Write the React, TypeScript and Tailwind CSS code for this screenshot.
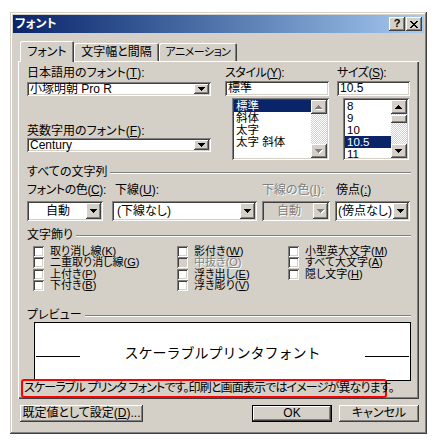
import React from "react";

const raised =
  "shadow-[inset_-1px_-1px_#404040,inset_1px_1px_#ffffff,inset_-2px_-2px_#808080,inset_2px_2px_#d4d0c8]";
const sunken =
  "shadow-[inset_1px_1px_#808080,inset_-1px_-1px_#ffffff,inset_2px_2px_#404040,inset_-2px_-2px_#d4d0c8]";
const dim = "text-[#808080] [text-shadow:1px_1px_0_#ffffff]";

// pixel staircase triangles, classic style
const DOWN = "M0 0H7V1H6V2H5V3H4V4H3V3H2V2H1V1H0Z";
const UP = "M3 0H4V1H5V2H6V3H7V4H0V3H1V2H2V1H3Z";

function Arrow({ up = false, disabled = false }: { up?: boolean; disabled?: boolean }) {
  const d = up ? UP : DOWN;
  return (
    <svg width="8" height="5" viewBox="0 0 8 5" shapeRendering="crispEdges" className="block">
      {disabled && <path d={d} fill="#ffffff" transform="translate(1 1)" />}
      <path d={d} fill={disabled ? "#808080" : "#000000"} />
    </svg>
  );
}

function Combo({
  className,
  children,
  btn,
  disabled = false,
  center = false,
}: {
  className: string;
  children: React.ReactNode;
  btn: string;
  disabled?: boolean;
  center?: boolean;
}) {
  return (
    <div className={`${className} ${disabled ? "bg-[#d4d0c8]" : "bg-white"} ${sunken} p-[2px] flex`}>
      <div
        className={`flex-1 flex items-center whitespace-nowrap pl-[1px] leading-[10px] ${
          center ? "justify-center" : ""
        } ${disabled ? dim : ""}`}
      >
        {children}
      </div>
      <div className={`${btn} h-full bg-[#d4d0c8] ${raised} flex items-center justify-center`}>
        <Arrow disabled={disabled} />
      </div>
    </div>
  );
}

function TextBox({ className, children }: { className: string; children: React.ReactNode }) {
  return (
    <div className={`${className} bg-white ${sunken} px-[3px] flex items-center whitespace-nowrap leading-[11px]`}>
      {children}
    </div>
  );
}

function ScrollBtn({ up = false, disabled = false }: { up?: boolean; disabled?: boolean }) {
  return (
    <div className={`h-[14px] w-[16px] shrink-0 bg-[#d4d0c8] ${raised} flex items-center justify-center`}>
      <Arrow up={up} disabled={disabled} />
    </div>
  );
}

const track =
  "bg-[image:repeating-conic-gradient(#ffffff_0_25%,#d4d0c8_0_50%)] bg-[length:2px_2px]";

function ListBox({
  className,
  items,
  selected,
  disabled = false,
}: {
  className: string;
  items: string[];
  selected: number;
  disabled?: boolean;
}) {
  return (
    <div className={`${className} bg-white ${sunken} p-[2px] flex`}>
      <div className="flex-1 flex flex-col overflow-hidden">
        {items.map((it, i) => (
          <div
            key={it}
            className={`h-[12px] shrink-0 text-[11.5px] leading-[12px] pl-[2px] whitespace-nowrap ${
              i === selected ? "bg-[#0a246a] text-white" : ""
            }`}
          >
            {it}
          </div>
        ))}
      </div>
      <div className="w-[16px] flex flex-col">
        <ScrollBtn up disabled={disabled} />
        <div className={`flex-1 ${track} flex flex-col pt-[1px]`}>
          {!disabled && <div className={`h-[8px] bg-[#d4d0c8] ${raised}`} />}
        </div>
        <ScrollBtn disabled={disabled} />
      </div>
    </div>
  );
}

function GroupHead({ label, className }: { label: string; className: string }) {
  return (
    <div className={`${className} flex`}>
      <span className="leading-[13px] whitespace-nowrap pr-[3px]">{label}</span>
      <div className="flex-1 h-[2px] border-t border-t-[#808080] bg-white self-center" />
    </div>
  );
}

function Check({ label, k, disabled = false }: { label: string; k: string; disabled?: boolean }) {
  return (
    <div className="h-[11.33px] flex items-center whitespace-nowrap">
      <div className={`w-[11px] h-[11px] shrink-0 ${disabled ? "bg-[#d4d0c8]" : "bg-white"} ${sunken}`} />
      <span className={`ml-[6px] text-[11px] leading-[11px] ${disabled ? dim : ""}`}>
        {label}(<u>{k}</u>)
      </span>
    </div>
  );
}

const tabShadow = "shadow-[inset_1px_1px_#ffffff,inset_-1px_0_#404040,inset_-2px_0_#808080]";

export default function App() {
  return (
    <div className="w-[437px] h-[445px] bg-white pl-[10px] pt-[12px] font-['Liberation_Sans','Noto_Sans_CJK_JP',sans-serif] text-[12px] text-black [font-feature-settings:'palt']">
      <div className="w-[417px] h-[422px] bg-[#d4d0c8] p-[3px] flex flex-col shadow-[inset_-1px_-1px_#404040,inset_1px_1px_#d4d0c8,inset_-2px_-2px_#808080,inset_2px_2px_#ffffff]">
        {/* title bar */}
        <div className="h-[18px] shrink-0 bg-linear-to-r from-[#0a246a] to-[#a6caf0] flex items-center pl-[2px] pr-[2px]">
          <span className="text-white font-bold leading-[18px]">フォント</span>
          <div className="ml-auto flex gap-[1px]">
            <div className={`w-[16px] h-[14px] bg-[#d4d0c8] ${raised} flex items-center justify-center text-[11px] font-bold leading-none pb-[1px]`}>
              ?
            </div>
            <div className={`w-[16px] h-[14px] bg-[#d4d0c8] ${raised} flex items-center justify-center`}>
              <svg width="8" height="7" viewBox="0 0 8 7" shapeRendering="crispEdges">
                <path
                  d="M0 0H2V1H3V2H5V1H6V0H8V1H7V2H6V3H5V4H6V5H7V6H8V7H6V6H5V5H3V6H2V7H0V6H1V5H2V4H3V3H2V2H1V1H0Z"
                  fill="#000"
                />
              </svg>
            </div>
          </div>
        </div>

        <div className="px-[5px] flex flex-col">
          {/* tabs */}
          <div className="h-[28px] flex items-end pl-[2px] whitespace-nowrap">
            <div className={`relative z-10 -mb-[1px] w-[54px] h-[21px] bg-[#d4d0c8] rounded-t-[2px] ${tabShadow} flex items-center justify-center pt-[1px]`}>
              フォント
            </div>
            <div className={`w-[85px] h-[18px] rounded-t-[2px] ${tabShadow} flex items-center justify-center`}>
              文字幅と間隔
            </div>
            <div className={`w-[78px] h-[18px] rounded-t-[2px] ${tabShadow} flex items-center justify-center text-[11px] tracking-[-0.5px]`}>
              アニメーション
            </div>
          </div>

          {/* panel */}
          <div className="h-[338px] shadow-[inset_1px_1px_#ffffff,inset_-1px_-1px_#404040,inset_-2px_-2px_#808080] pt-[5px] pl-[9px] pr-[8px] flex flex-col">
            <div className="flex h-[94px]">
              <div className="w-[184px] flex flex-col">
                <div className="h-[14px] leading-[14px]">
                  日本語用のフォント(<u>T</u>):
                </div>
                <Combo className="mt-[2px] w-[184px] h-[14px]" btn="w-[15px]">
                  小塚明朝 Pro R
                </Combo>
                <div className="mt-[28px] h-[14px] leading-[14px]">
                  英数字用のフォント(<u>F</u>):
                </div>
                <Combo className="w-[184px] h-[14px]" btn="w-[15px]">
                  Century
                </Combo>
              </div>
              <div className="ml-[14px] w-[104px] flex flex-col">
                <div className="h-[14px] leading-[14px] tracking-[-0.4px]">
                  スタイル(<u>Y</u>):
                </div>
                <TextBox className="mt-[1px] h-[15px]">標準</TextBox>
                <ListBox
                  className="mt-[2px] ml-[7px] h-[62px]"
                  items={["標準", "斜体", "太字", "太字 斜体"]}
                  selected={0}
                  disabled
                />
              </div>
              <div className="ml-[8px] w-[73px] flex flex-col">
                <div className="h-[14px] leading-[14px] tracking-[-0.4px]">
                  サイズ(<u>S</u>):
                </div>
                <TextBox className="mt-[1px] h-[15px]">10.5</TextBox>
                <ListBox
                  className="mt-[2px] ml-[6px] mr-[1px] h-[62px]"
                  items={["8", "9", "10", "10.5", "11"]}
                  selected={3}
                />
              </div>
            </div>

            {/* すべての文字列 */}
            <GroupHead label="すべての文字列" className="mt-[6px] h-[14px]" />
            <div className="mt-[3px] flex h-[14px] leading-[14px] whitespace-nowrap">
              <div className="w-[85px] tracking-[-0.4px]">
                フォントの色(<u>C</u>):
              </div>
              <div className="w-[150px] pl-[3px]">
                下線(<u>U</u>):
              </div>
              <div className={`w-[73px] ${dim}`}>
                下線の色(<u>I</u>):
              </div>
              <div className="pl-[1px]">
                傍点(<u>:</u>)
              </div>
            </div>
            <div className="mt-[4px] flex h-[20px]">
              <Combo className="w-[76px] h-[20px]" btn="w-[15px]" center>
                自動
              </Combo>
              <Combo className="ml-[9px] w-[145px] h-[20px]" btn="w-[15px]">
                <span className="pl-[2px]">(下線なし)</span>
              </Combo>
              <Combo className="ml-[5px] w-[68px] h-[20px]" btn="w-[15px]" disabled center>
                自動
              </Combo>
              <Combo className="ml-[5px] w-[75px] h-[20px]" btn="w-[15px]">
                (傍点なし)
              </Combo>
            </div>

            {/* 文字飾り */}
            <GroupHead label="文字飾り" className="mt-[8px] h-[14px]" />
            <div className="mt-[3px] pl-[6px] flex">
              <div className="w-[144px] flex flex-col">
                <Check label="取り消し線" k="K" />
                <Check label="二重取り消し線" k="G" />
                <Check label="上付き" k="P" />
                <Check label="下付き" k="B" />
              </div>
              <div className="w-[111px] flex flex-col">
                <Check label="影付き" k="W" />
                <Check label="中抜き" k="O" disabled />
                <Check label="浮き出し" k="E" />
                <Check label="浮き彫り" k="V" />
              </div>
              <div className="flex flex-col">
                <Check label="小型英大文字" k="M" />
                <Check label="すべて大文字" k="A" />
                <Check label="隠し文字" k="H" />
              </div>
            </div>

            {/* プレビュー */}
            <GroupHead label="プレビュー" className="mt-[18px] h-[13px]" />
            <div className="ml-[7px] h-[59px] bg-white border border-black flex items-center justify-between px-[1px]">
              <div className="w-[44px] h-[1px] bg-black mt-[10px]" />
              <span className="text-[14px] leading-[16px] [font-feature-settings:normal] font-['Noto_Sans_CJK_JP',sans-serif]">
                スケーラブルプリンタフォント
              </span>
              <div className="w-[44px] h-[1px] bg-black mt-[10px]" />
            </div>
            <div className="relative -mt-[2px] -ml-[6px] w-[366px] h-[19px] border-2 border-[#ff0000] rounded-[3px] flex items-center pl-[1px] whitespace-nowrap leading-[13px] tracking-[-0.85px]">
              スケーラブル プリンタ フォントです。印刷と画面表示ではイメージが異なります。
            </div>
          </div>

          {/* buttons */}
          <div className="mt-[6px] flex pl-[2px] h-[17px]">
            <div className={`w-[123px] h-[17px] ${raised} flex items-center justify-center whitespace-nowrap leading-[13px]`}>
              既定値として設定(<u>D</u>)...
            </div>
            <div className="ml-auto w-[80px] h-[17px] border border-black">
              <div className={`h-full ${raised} flex items-center justify-center leading-[13px]`}>OK</div>
            </div>
            <div className={`ml-[7px] w-[80px] h-[17px] ${raised} flex items-center justify-center leading-[13px]`}>
              キャンセル
            </div>
          </div>
        </div>
      </div>
    </div>
  );
}
